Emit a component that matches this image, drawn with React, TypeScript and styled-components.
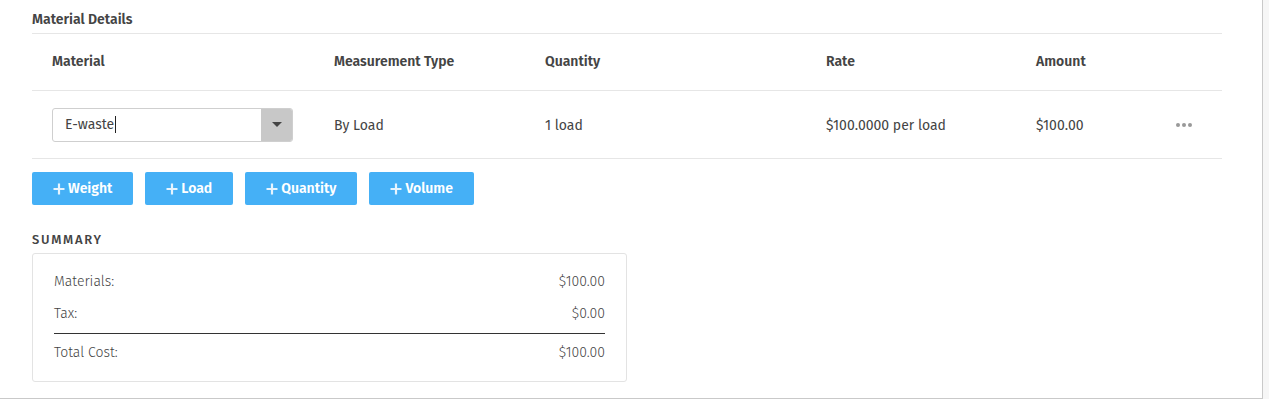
import React from 'react'
import styled, { createGlobalStyle } from 'styled-components'

const GlobalStyle = createGlobalStyle`
    html, body {
        margin: 0;
        padding: 0;
        background: #f6f6f6;
        font-family: "Fira Sans", "Open Sans", "Noto Sans", sans-serif;
        color: #444;
    }
    * { box-sizing: border-box; }
`

const columns = '282px 211px 281px 210px 1fr 62px'

const rows = [
    { material: 'E-waste', type: 'By Load', quantity: '1 load', rate: '$100.0000 per load', amount: '$100.00' },
]

const addButtons = ['Weight', 'Load', 'Quantity', 'Volume']

const summary = [
    { label: 'Materials:', value: '$100.00' },
    { label: 'Tax:', value: '$0.00' },
]

const App: React.FC = () => {
    return (
        <>
            <GlobalStyle />
            <Panel>
                <SectionTitle>Material Details</SectionTitle>
                <Table>
                    <HeadRow>
                        <span>Material</span>
                        <span>Measurement Type</span>
                        <span>Quantity</span>
                        <span>Rate</span>
                        <span>Amount</span>
                        <span />
                    </HeadRow>
                    {rows.map((row, i) => (
                        <DataRow key={i}>
                            <Select>
                                <SelectInput>
                                    {row.material}
                                    <Cursor />
                                </SelectInput>
                                <SelectToggle>
                                    <Caret />
                                </SelectToggle>
                            </Select>
                            <span>{row.type}</span>
                            <span>{row.quantity}</span>
                            <span>{row.rate}</span>
                            <span>{row.amount}</span>
                            <Dots>
                                <i /><i /><i />
                            </Dots>
                        </DataRow>
                    ))}
                </Table>
                <ButtonBar>
                    {addButtons.map(label => (
                        <AddButton key={label}>
                            <Plus viewBox="0 0 12 12">
                                <path d="M6 0.5v11M0.5 6h11" stroke="currentColor" strokeWidth="2.2" />
                            </Plus>
                            {label}
                        </AddButton>
                    ))}
                </ButtonBar>
                <SummaryTitle>Summary</SummaryTitle>
                <SummaryBox>
                    {summary.map(item => (
                        <SummaryLine key={item.label}>
                            <span>{item.label}</span>
                            <span>{item.value}</span>
                        </SummaryLine>
                    ))}
                    <SummaryLine $total>
                        <span>Total Cost:</span>
                        <span>$100.00</span>
                    </SummaryLine>
                </SummaryBox>
            </Panel>
        </>
    )
}

export default App

const Panel = styled.div`
    width: 1263px;
    height: 399px;
    background: #fff;
    border-right: 1px solid #c9c9c9;
    border-bottom: 1px solid #c9c9c9;
    padding: 11px 40px 0 32px;
`

const SectionTitle = styled.h3`
    margin: 0;
    font-size: 14px;
    font-weight: 600;
    color: #444;
    line-height: 18px;
    padding-bottom: 4px;
    border-bottom: 1px solid #e6e6e6;
`

const Table = styled.div`
    display: flex;
    flex-direction: column;
`

const HeadRow = styled.div`
    display: grid;
    grid-template-columns: ${columns};
    align-items: center;
    height: 57px;
    padding-left: 20px;
    padding-bottom: 2px;
    border-bottom: 1px solid #e6e6e6;
    font-size: 14px;
    font-weight: 600;
    color: #444;
`

const DataRow = styled.div`
    display: grid;
    grid-template-columns: ${columns};
    align-items: center;
    height: 68px;
    padding-left: 20px;
    padding-top: 1px;
    border-bottom: 1px solid #e6e6e6;
    font-size: 14px;
    color: #444;
`

const Select = styled.div`
    display: flex;
    width: 241px;
    height: 34px;
    margin-top: -1px;
    border: 1px solid #cfcfcf;
    border-radius: 3px;
    overflow: hidden;
`

const SelectInput = styled.div`
    flex: 1;
    display: flex;
    align-items: center;
    padding-left: 12px;
    font-size: 14px;
    color: #444;
`

const Cursor = styled.span`
    display: inline-block;
    width: 1px;
    height: 17px;
    background: #222;
    margin-left: 1px;
`

const SelectToggle = styled.div`
    width: 31px;
    background: #c8c8c8;
    display: flex;
    align-items: center;
    justify-content: center;
`

const Caret = styled.span`
    width: 0;
    height: 0;
    border-left: 5px solid transparent;
    border-right: 5px solid transparent;
    border-top: 5px solid #444;
`

const Dots = styled.div`
    display: flex;
    gap: 2px;
    padding-left: 16px;

    i {
        width: 4px;
        height: 4px;
        border-radius: 50%;
        background: #999;
    }
`

const ButtonBar = styled.div`
    display: flex;
    gap: 12px;
    margin-top: 13px;
`

const AddButton = styled.button`
    display: flex;
    align-items: center;
    gap: 3px;
    height: 33px;
    padding: 0 21px;
    border: none;
    border-radius: 2px;
    background: #45b0f6;
    color: #fff;
    font-family: inherit;
    font-size: 14px;
    font-weight: 600;
    cursor: pointer;
`

const Plus = styled.svg`
    width: 12px;
    height: 12px;
    color: #e6f4fe;
`

const SummaryTitle = styled.div`
    margin-top: 27px;
    font-size: 13px;
    font-weight: 500;
    letter-spacing: 1.7px;
    text-transform: uppercase;
    color: #444;
    line-height: 16px;
`

const SummaryBox = styled.div`
    width: 595px;
    margin-top: 5px;
    padding: 11px 21px 11px 21px;
    border: 1px solid #e3e3e3;
    border-radius: 3px;
`

const SummaryLine = styled.div<{ $total?: boolean }>`
    display: flex;
    justify-content: space-between;
    align-items: center;
    height: ${p => (p.$total ? '37px' : '32px')};
    font-size: 14px;
    font-weight: 300;
    color: #444;
    border-top: ${p => (p.$total ? '1px solid #333' : 'none')};
    margin-top: ${p => (p.$total ? '4px' : '0')};
`
